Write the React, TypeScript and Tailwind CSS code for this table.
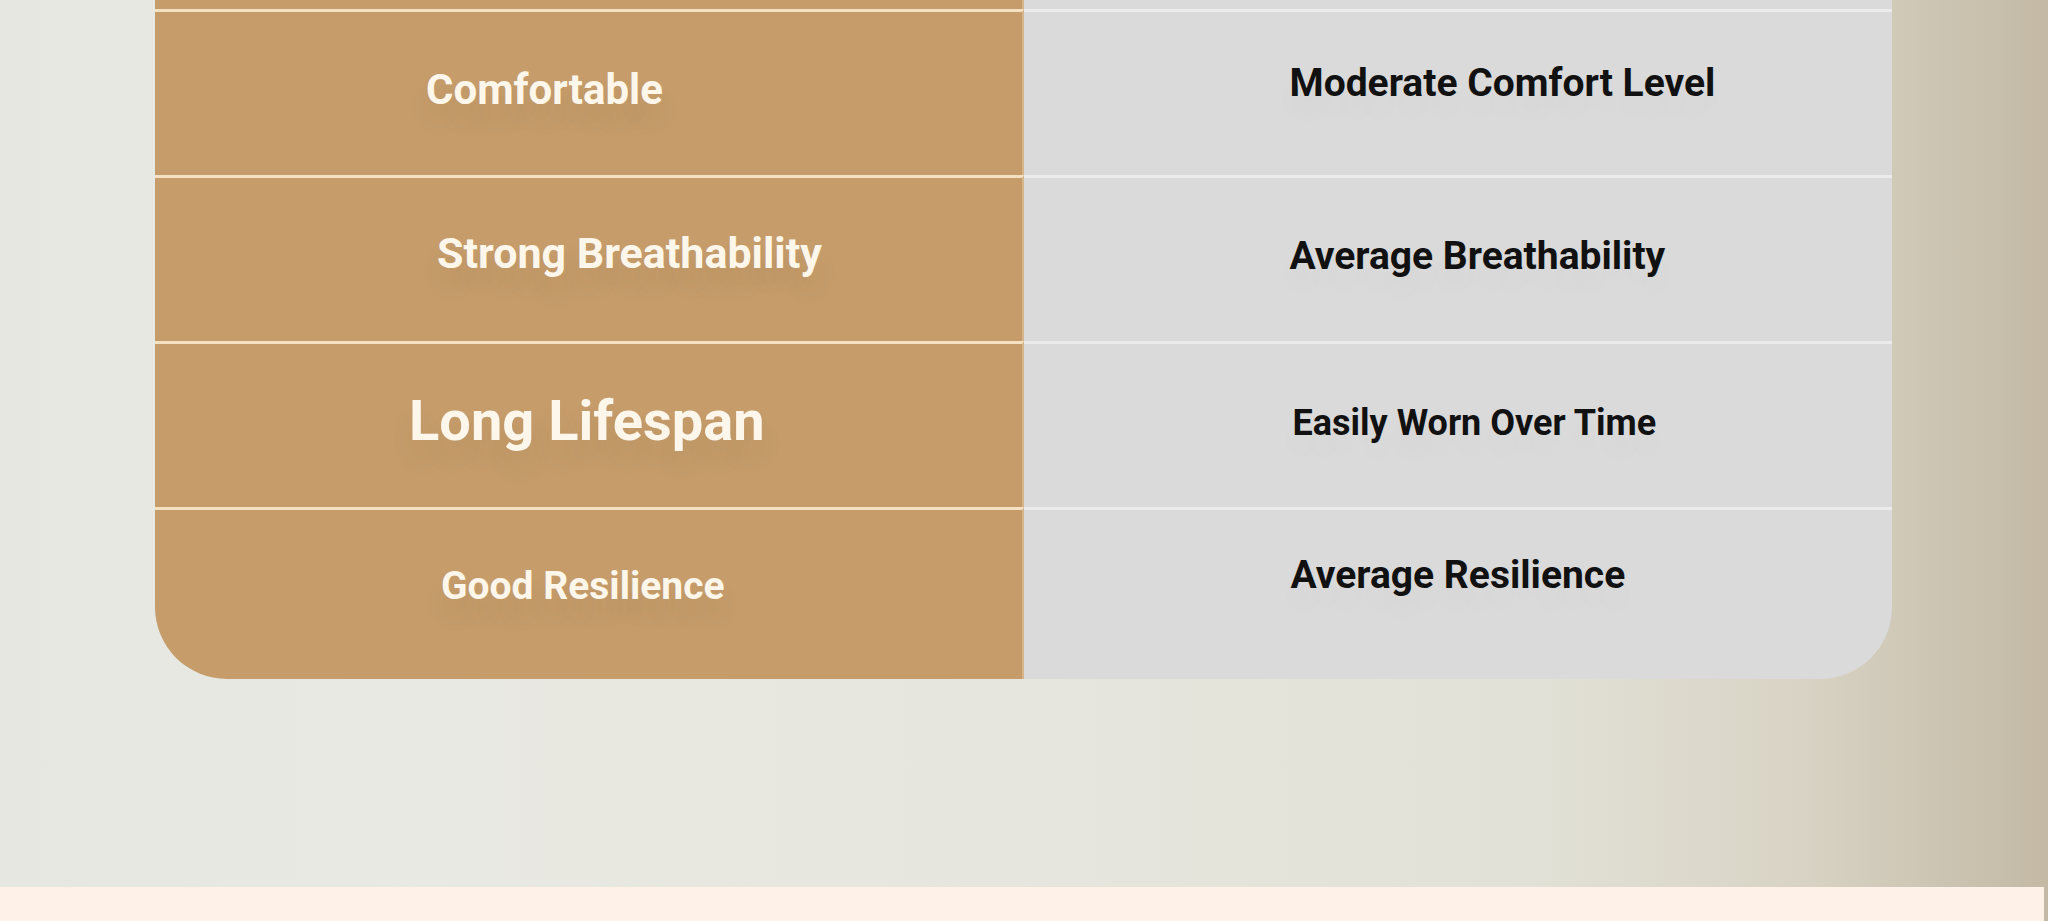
const rows = [
  {
    left: "Comfortable",
    right: "Moderate Comfort Level",
    leftCls: "pl-[271px] pb-[8px] text-[42px]",
    rightCls: "pl-[266px] pb-[20px] text-[39px]",
    h: "h-[166px]",
  },
  {
    left: "Strong Breathability",
    right: "Average Breathability",
    leftCls: "pl-[282px] pb-[12px] text-[43px]",
    rightCls: "pl-[266px] pb-[6px] text-[39px]",
    h: "h-[166px]",
  },
  {
    left: "Long Lifespan",
    right: "Easily Worn Over Time",
    leftCls: "pl-[254px] pb-[10px] text-[56px]",
    rightCls: "pl-[269px] pb-[6px] text-[36px]",
    h: "h-[166px]",
  },
  {
    left: "Good Resilience",
    right: "Average Resilience",
    leftCls: "pl-[286px] pb-[16px] text-[39px]",
    rightCls: "pl-[267px] pb-[38px] text-[39px]",
    h: "h-[172px]",
  },
];

export default function App() {
  return (
    <div className="w-full h-[921px] flex flex-col overflow-hidden bg-[linear-gradient(90deg,#e6e7e0_0%,#e9e9e3_20%,#e6e6de_50%,#e2e1d7_75%,#d8d3c4_88%,#c3b9a5_100%)] font-['Roboto','Liberation_Sans',sans-serif]">
      <div className="h-[887px] px-[155px] pr-[156px]">
        <div className="rounded-b-[72px] overflow-hidden grid grid-cols-2">
          {/* cut-off row at the top */}
          <div className="h-[9px] bg-[#c59c6a] border-r-2 border-[#d6b58a]" />
          <div className="h-[9px] bg-[#dadada]" />
          {rows.map((r) => (
            <div key={r.left} className="contents">
              <div
                className={`${r.h} bg-[#c59c6a] border-t-[3px] border-[#f4e1c3] border-r-2 border-r-[#d6b58a] flex items-center ${r.leftCls}`}
              >
                <span className="font-bold text-[#fdf6ea] leading-none [text-shadow:0_18px_24px_rgba(90,70,40,0.08)]">
                  {r.left}
                </span>
              </div>
              <div
                className={`${r.h} bg-[#dadada] border-t-[3px] border-[#ebebeb] flex items-center ${r.rightCls}`}
              >
                <span className="font-bold text-[#111111] leading-none [text-shadow:0_18px_24px_rgba(0,0,0,0.03)]">
                  {r.right}
                </span>
              </div>
            </div>
          ))}
        </div>
      </div>
      <div className="flex-1 bg-[#fdf1e8] mr-[4px]" />
    </div>
  );
}
